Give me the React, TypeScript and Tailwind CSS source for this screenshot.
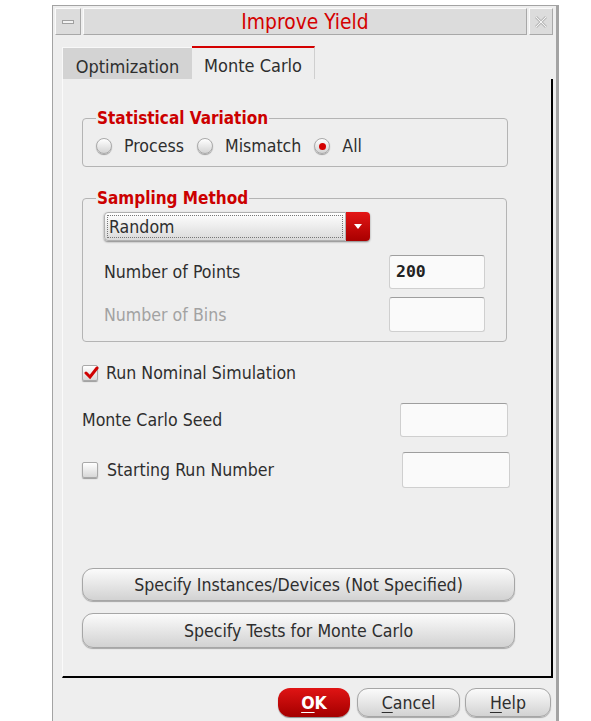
import type { ReactNode } from 'react';

function Radio({ checked, label }: { checked?: boolean; label: string }) {
  return (
    <div className="flex items-center gap-[12px]">
      <div className="flex h-[16px] w-[16px] items-center justify-center rounded-full border border-[#a9a9a9] bg-gradient-to-b from-white to-[#d3d3d3] shadow-[0_1px_1px_rgba(0,0,0,0.35)]">
        {checked && <div className="h-[7px] w-[7px] rounded-full bg-[#d40000]" />}
      </div>
      <span>{label}</span>
    </div>
  );
}

function CheckBox({ checked }: { checked?: boolean }) {
  return (
    <div className="relative h-[16px] w-[16px] rounded-[2px] border border-[#a9a9a9] bg-gradient-to-b from-white to-[#d8d8d8] shadow-[0_1px_1px_rgba(0,0,0,0.35)]">
      {checked && (
        <svg className="absolute left-[1px] top-[0px]" width="15" height="14" viewBox="0 0 15 14">
          <path d="M2 7 L6 11 L13 2" fill="none" stroke="#d00000" strokeWidth="3" strokeLinecap="round" />
        </svg>
      )}
    </div>
  );
}

function Field({ w, h, children }: { w: string; h: string; children?: ReactNode }) {
  return (
    <div
      className={`${w} ${h} flex items-center rounded-[3px] border border-[#cfcfcf] border-t-[#9e9e9e] bg-[#fafafa] pl-[6px] font-['DejaVu_Sans_Mono',monospace] text-[16.5px] font-semibold text-[#222]`}
    >
      {children}
    </div>
  );
}

function GrayButton({ className, children }: { className: string; children: ReactNode }) {
  return (
    <div
      className={`${className} flex items-center justify-center rounded-[11px] border border-[#a6a6a6] bg-gradient-to-b from-[#fbfbfb] to-[#d2d2d2] shadow-[0_1px_1px_rgba(0,0,0,0.3)]`}
    >
      {children}
    </div>
  );
}

export default function App() {
  return (
    <div className="h-[721px] w-[591px] overflow-hidden bg-white pl-[52px] pt-[5px] font-['DejaVu_Sans_Condensed','DejaVu_Sans',sans-serif] text-[17.6px] leading-[20px] text-[#2e2e2e] [font-stretch:condensed]">
      <div className="flex h-[716px] w-[507px] flex-col border-l border-t border-r-[3px] border-[#a3a3a3] bg-[#eeeeee]">
        {/* title bar */}
        <div className="ml-[2px] mr-[3px] mt-[2px] flex h-[27px] gap-[2px]">
          <div className="flex w-[26px] items-center justify-center border border-[#fafafa] border-b-[#a8a8a8] border-r-[#a8a8a8] bg-[#dcdcdc]">
            <div className="h-[4px] w-[12px] border border-[#a0a0a0] bg-[#f2f2f2]" />
          </div>
          <div className="flex flex-1 items-center justify-center border border-[#fafafa] border-b-[#a8a8a8] border-r-[#a8a8a8] bg-[#dcdcdc] text-[20.8px] text-[#d40000]">
            Improve Yield
          </div>
          <div className="flex w-[24px] items-center justify-center border border-[#fafafa] border-b-[#a8a8a8] border-r-[#a8a8a8] bg-[#dcdcdc]">
            <svg width="14" height="14" viewBox="0 0 14 14">
              <path d="M2 2 L12 12 M12 2 L2 12" stroke="#bdbdbd" strokeWidth="3" />
              <path d="M2 2 L12 12 M12 2 L2 12" stroke="#f4f4f4" strokeWidth="1" />
            </svg>
          </div>
        </div>

        {/* tabs */}
        <div className="ml-[9px] mt-[11px] flex h-[33px] items-end">
          <div className="flex h-[32px] w-[130px] items-center justify-center border-l border-t border-[#f8f8f8] bg-[#d3d3d3] pt-[6px] text-[18px]">
            Optimization
          </div>
          <div className="flex h-[33px] w-[123px] items-center justify-center border-r border-t-2 border-r-[#cfcfcf] border-t-[#d40000] bg-[#eeeeee] pt-[5px] text-[18px]">
            Monte Carlo
          </div>
        </div>

        {/* panel */}
        <div className="ml-[9px] flex h-[599px] w-[491px] flex-col border-b-2 border-l border-r-2 border-b-black border-l-[#fafafa] border-r-black pl-[19px]">
          <fieldset className="mt-[29px] w-[426px] rounded-[4px] border border-[#b4b4b4] pb-[9px] pl-[13px]">
            <legend className="px-[1px] text-[17px] font-bold text-[#cc0000]">Statistical Variation</legend>
            <div className="mt-[7px] flex h-[22px] items-center gap-[13px]">
              <Radio label="Process" />
              <Radio label="Mismatch" />
              <Radio label="All" checked />
            </div>
          </fieldset>

          <fieldset className="mt-[21px] w-[425px] rounded-[4px] border border-[#b4b4b4] pb-[9px] pl-[13px] pr-[21px]">
            <legend className="px-[1px] text-[17px] font-bold text-[#cc0000]">Sampling Method</legend>
            <div className="pl-[8px]">
              <div className="mt-[4px] flex h-[29px] w-[266px] rounded-[4px] shadow-[0_1px_2px_rgba(0,0,0,0.45)]">
                <div className="flex flex-1 items-center rounded-l-[4px] border border-[#b0b0b0] bg-gradient-to-b from-white to-[#dadada] p-[2px]">
                  <div className="flex h-full w-full items-center border border-dotted border-[#777] pl-[1px]">Random</div>
                </div>
                <div className="flex w-[24px] items-center justify-center rounded-r-[4px] bg-gradient-to-b from-[#e41616] to-[#a80000]">
                  <svg width="10" height="7" viewBox="0 0 10 7">
                    <path d="M1 1 H9 L5 6 Z" fill="white" />
                  </svg>
                </div>
              </div>
              <div className="mt-[14px] flex items-center justify-between">
                <span>Number of Points</span>
                <Field w="w-[96px]" h="h-[34px]">200</Field>
              </div>
              <div className="mt-[8px] flex items-center justify-between">
                <span className="text-[#a2a2a2]">Number of Bins</span>
                <Field w="w-[96px]" h="h-[35px]" />
              </div>
            </div>
          </fieldset>

          <div className="mt-[20px] flex h-[22px] items-center gap-[8px]">
            <CheckBox checked />
            <span>Run Nominal Simulation</span>
          </div>

          <div className="mt-[19px] flex w-[426px] items-center justify-between">
            <span>Monte Carlo Seed</span>
            <Field w="w-[108px]" h="h-[34px]" />
          </div>

          <div className="mt-[15px] flex w-[428px] items-center justify-between">
            <div className="flex items-center gap-[9px]">
              <CheckBox />
              <span>Starting Run Number</span>
            </div>
            <Field w="w-[108px]" h="h-[36px]" />
          </div>

          <GrayButton className="mt-[80px] h-[33px] w-[433px]">Specify Instances/Devices (Not Specified)</GrayButton>
          <GrayButton className="mt-[12px] h-[35px] w-[433px]">Specify Tests for Monte Carlo</GrayButton>
        </div>

        {/* bottom buttons */}
        <div className="mr-[5px] mt-[10px] flex justify-end">
          <div className="flex h-[29px] w-[72px] items-center justify-center rounded-[12px] bg-gradient-to-b from-[#e01414] to-[#a40000] font-bold text-white shadow-[0_1px_1px_rgba(0,0,0,0.4)]">
            <span>
              <span className="underline underline-offset-[3px]">O</span>K
            </span>
          </div>
          <GrayButton className="ml-[7px] h-[29px] w-[103px]">
            <span>
              <span className="underline underline-offset-[3px]">C</span>ancel
            </span>
          </GrayButton>
          <GrayButton className="ml-[5px] h-[29px] w-[86px]">
            <span>
              <span className="underline underline-offset-[3px]">H</span>elp
            </span>
          </GrayButton>
        </div>
      </div>
    </div>
  );
}
